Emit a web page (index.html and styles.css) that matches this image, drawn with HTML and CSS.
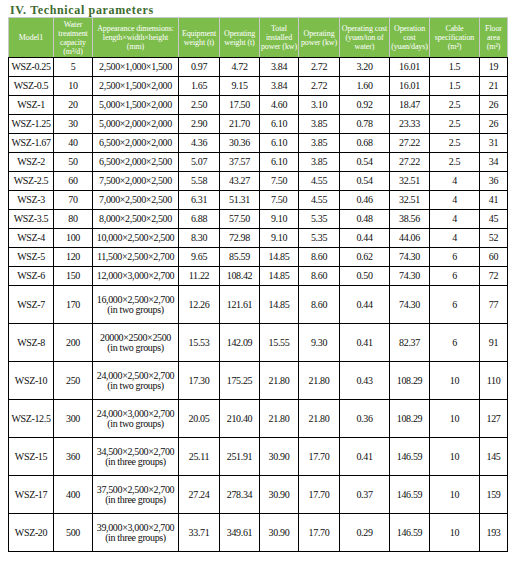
FILE: index.html
```html
<!DOCTYPE html>
<html>
<head>
<meta charset="utf-8">
<link rel="stylesheet" href="styles.css">
</head>
<body>
<div class="title">IV. Technical parameters</div>
<table class="params">
<colgroup>
<col class="c1"><col class="c2"><col class="c3"><col class="c4"><col class="c5"><col class="c6"><col class="c7"><col class="c8"><col class="c9"><col class="c10"><col class="c11">
</colgroup>
<thead>
<tr>
<th>Model1</th>
<th>Water<br>treatment<br>capacity<br>(m³/d)</th>
<th>Appearance dimensions:<br>length×width×height<br>(mm)</th>
<th>Equipment<br>weight (t)</th>
<th>Operating<br>weight (t)</th>
<th>Total<br>installed<br>power (kw)</th>
<th>Operating<br>power (kw)</th>
<th>Operating cost<br>(yuan/ton of<br>water)</th>
<th>Operation<br>cost<br>(yuan/days)</th>
<th>Cable<br>specification<br>(m²)</th>
<th>Floor<br>area<br>(m²)</th>
</tr>
</thead>
<tbody>
<tr class="s"><td>WSZ-0.25</td><td>5</td><td>2,500×1,000×1,500</td><td>0.97</td><td>4.72</td><td>3.84</td><td>2.72</td><td>3.20</td><td>16.01</td><td>1.5</td><td>19</td></tr>
<tr class="s"><td>WSZ-0.5</td><td>10</td><td>2,500×1,500×2,000</td><td>1.65</td><td>9.15</td><td>3.84</td><td>2.72</td><td>1.60</td><td>16.01</td><td>1.5</td><td>21</td></tr>
<tr class="s"><td>WSZ-1</td><td>20</td><td>5,000×1,500×2,000</td><td>2.50</td><td>17.50</td><td>4.60</td><td>3.10</td><td>0.92</td><td>18.47</td><td>2.5</td><td>26</td></tr>
<tr class="s"><td>WSZ-1.25</td><td>30</td><td>5,000×2,000×2,000</td><td>2.90</td><td>21.70</td><td>6.10</td><td>3.85</td><td>0.78</td><td>23.33</td><td>2.5</td><td>26</td></tr>
<tr class="s"><td>WSZ-1.67</td><td>40</td><td>6,500×2,000×2,000</td><td>4.36</td><td>30.36</td><td>6.10</td><td>3.85</td><td>0.68</td><td>27.22</td><td>2.5</td><td>31</td></tr>
<tr class="s"><td>WSZ-2</td><td>50</td><td>6,500×2,000×2,500</td><td>5.07</td><td>37.57</td><td>6.10</td><td>3.85</td><td>0.54</td><td>27.22</td><td>2.5</td><td>34</td></tr>
<tr class="s"><td>WSZ-2.5</td><td>60</td><td>7,500×2,000×2,500</td><td>5.58</td><td>43.27</td><td>7.50</td><td>4.55</td><td>0.54</td><td>32.51</td><td>4</td><td>36</td></tr>
<tr class="s"><td>WSZ-3</td><td>70</td><td>7,000×2,500×2,500</td><td>6.31</td><td>51.31</td><td>7.50</td><td>4.55</td><td>0.46</td><td>32.51</td><td>4</td><td>41</td></tr>
<tr class="s"><td>WSZ-3.5</td><td>80</td><td>8,000×2,500×2,500</td><td>6.88</td><td>57.50</td><td>9.10</td><td>5.35</td><td>0.48</td><td>38.56</td><td>4</td><td>45</td></tr>
<tr class="s"><td>WSZ-4</td><td>100</td><td>10,000×2,500×2,500</td><td>8.30</td><td>72.98</td><td>9.10</td><td>5.35</td><td>0.44</td><td>44.06</td><td>4</td><td>52</td></tr>
<tr class="s"><td>WSZ-5</td><td>120</td><td>11,500×2,500×2,700</td><td>9.65</td><td>85.59</td><td>14.85</td><td>8.60</td><td>0.62</td><td>74.30</td><td>6</td><td>60</td></tr>
<tr class="s"><td>WSZ-6</td><td>150</td><td>12,000×3,000×2,700</td><td>11.22</td><td>108.42</td><td>14.85</td><td>8.60</td><td>0.50</td><td>74.30</td><td>6</td><td>72</td></tr>
<tr class="t"><td>WSZ-7</td><td>170</td><td class="dim">16,000×2,500×2,700<br>(in two groups)</td><td>12.26</td><td>121.61</td><td>14.85</td><td>8.60</td><td>0.44</td><td>74.30</td><td>6</td><td>77</td></tr>
<tr class="t"><td>WSZ-8</td><td>200</td><td class="dim">20000×2500×2500<br>(in two groups)</td><td>15.53</td><td>142.09</td><td>15.55</td><td>9.30</td><td>0.41</td><td>82.37</td><td>6</td><td>91</td></tr>
<tr class="t"><td>WSZ-10</td><td>250</td><td class="dim">24,000×2,500×2,700<br>(in two groups)</td><td>17.30</td><td>175.25</td><td>21.80</td><td>21.80</td><td>0.43</td><td>108.29</td><td>10</td><td>110</td></tr>
<tr class="t"><td>WSZ-12.5</td><td>300</td><td class="dim">24,000×3,000×2,700<br>(in two groups)</td><td>20.05</td><td>210.40</td><td>21.80</td><td>21.80</td><td>0.36</td><td>108.29</td><td>10</td><td>127</td></tr>
<tr class="t"><td>WSZ-15</td><td>360</td><td class="dim">34,500×2,500×2,700<br>(in three groups)</td><td>25.11</td><td>251.91</td><td>30.90</td><td>17.70</td><td>0.41</td><td>146.59</td><td>10</td><td>145</td></tr>
<tr class="t"><td>WSZ-17</td><td>400</td><td class="dim">37,500×2,500×2,700<br>(in three groups)</td><td>27.24</td><td>278.34</td><td>30.90</td><td>17.70</td><td>0.37</td><td>146.59</td><td>10</td><td>159</td></tr>
<tr class="t"><td>WSZ-20</td><td>500</td><td class="dim">39,000×3,000×2,700<br>(in three groups)</td><td>33.71</td><td>349.61</td><td>30.90</td><td>17.70</td><td>0.29</td><td>146.59</td><td>10</td><td>193</td></tr>
</tbody>
</table>
</body>
</html>
```
FILE: styles.css
```css
html, body {
  margin: 0;
  padding: 0;
  background: #ffffff;
}
body {
  padding: 4px 10px 0 8px;
  font-family: "Liberation Serif", "DejaVu Serif", serif;
  color: #111111;
}
.title {
  font-weight: bold;
  font-size: 12px;
  line-height: 13px;
  letter-spacing: 0.65px;
  color: #3d6b30;
  padding-left: 2px;
}
.params {
  border-collapse: collapse;
  table-layout: fixed;
  width: 499px;
}
.c1 { width: 45px; }
.c2 { width: 39px; }
.c3 { width: 86px; }
.c4 { width: 41px; }
.c5 { width: 40px; }
.c6 { width: 39px; }
.c7 { width: 41px; }
.c8 { width: 50px; }
.c9 { width: 40px; }
.c10 { width: 50px; }
.c11 { width: 28px; }
.params th {
  background: #7dbd4c;
  color: #ffffff;
  font-weight: normal;
  font-size: 8px;
  line-height: 9px;
  letter-spacing: -0.1px;
  height: 39px;
  padding: 0;
  text-align: center;
  vertical-align: middle;
  border: 1px solid #c9c9c9;
  border-bottom: 1px solid #000000;
  white-space: nowrap;
  overflow: hidden;
}
.params td {
  font-size: 10px;
  line-height: 10px;
  letter-spacing: -0.35px;
  padding: 0;
  text-align: center;
  vertical-align: middle;
  border: 1px solid #000000;
  color: #0d0d0d;
  white-space: nowrap;
}
.params tr.s td { height: 18px; }
.params tr.t td { height: 37px; }
```
